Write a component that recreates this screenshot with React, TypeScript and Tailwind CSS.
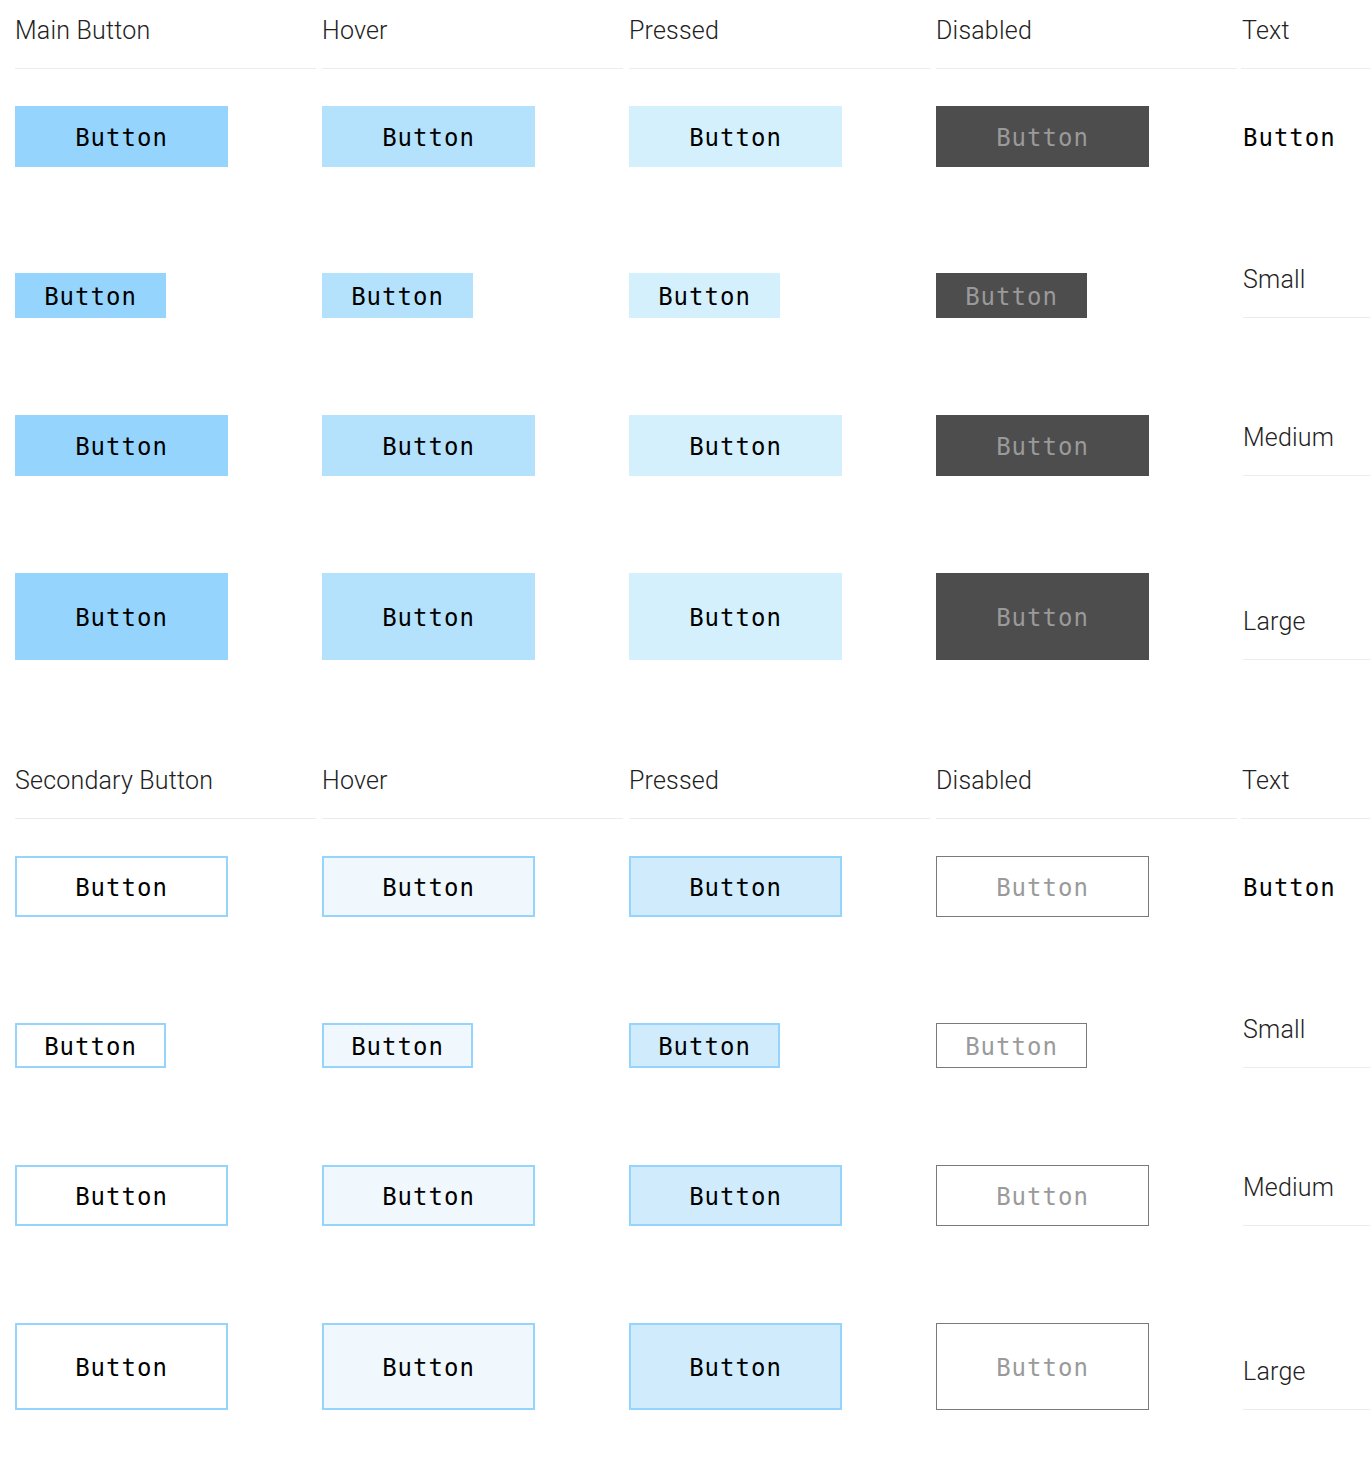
import React from 'react';

type Variant = 'main' | 'secondary';
type State = 'default' | 'hover' | 'pressed' | 'disabled';
type Size = 'default' | 'small' | 'medium' | 'large';

const STATES: State[] = ['default', 'hover', 'pressed', 'disabled'];

const SIZE_CLASS: Record<Size, string> = {
  default: 'w-[213px] h-[61px]',
  small: 'w-[151px] h-[45px]',
  medium: 'w-[213px] h-[61px]',
  large: 'w-[213px] h-[87px]',
};

const SKIN: Record<Variant, Record<State, string>> = {
  main: {
    default: 'bg-[#94d4fd] text-[#000]',
    hover: 'bg-[#b4e2fc] text-[#000]',
    pressed: 'bg-[#d4f0fc] text-[#000]',
    disabled: 'bg-[#4d4d4d] text-[#9a9a9a]',
  },
  secondary: {
    default: 'bg-white border-2 border-[#94d4fd] text-[#000]',
    hover: 'bg-[#f0f8fe] border-2 border-[#94d4fd] text-[#000]',
    pressed: 'bg-[#d0ecfc] border-2 border-[#94d4fd] text-[#000]',
    disabled: 'bg-white border border-[#7a7a7a] text-[#9a9a9a]',
  },
};

const ROWS: { size: Size; label?: string; mt: string }[] = [
  { size: 'default', mt: 'mt-[37px]' },
  { size: 'small', label: 'Small', mt: 'mt-[99px]' },
  { size: 'medium', label: 'Medium', mt: 'mt-[97px]' },
  { size: 'large', label: 'Large', mt: 'mt-[97px]' },
];

const mono = "font-['DejaVu_Sans_Mono',monospace] text-[24px] tracking-[1px] leading-none";
const light = "font-['Roboto',sans-serif] font-light text-[25px] tracking-[0.2px] leading-[28px] text-[#222]";

function DemoButton({ variant, state, size }: { variant: Variant; state: State; size: Size }) {
  return (
    <button
      type="button"
      className={`${SIZE_CLASS[size]} ${SKIN[variant][state]} ${mono} flex items-center justify-center pt-[2px]`}
    >
      Button
    </button>
  );
}

function LabelCell({ children }: { children: React.ReactNode }) {
  return (
    <div className="border-b border-[#ececec]">
      <div className={`${light} pb-[23px]`}>{children}</div>
    </div>
  );
}

function Section({ variant, title }: { variant: Variant; title: string }) {
  const headers = [title, 'Hover', 'Pressed', 'Disabled', 'Text'];
  return (
    <section>
      {/* header row */}
      <div className="grid grid-cols-[301px_301px_301px_301px_1fr] gap-x-[6px] pl-[15px]">
        {headers.map((h, i) => (
          <div key={h} className={`border-b border-[#ececec] ${i === 4 ? '-ml-[2px] pl-[1px]' : ''}`}>
            <div className={`${light} pt-[17px] pb-[23px]`}>{h}</div>
          </div>
        ))}
      </div>

      {ROWS.map((row) => (
        <div
          key={row.size}
          className={`grid grid-cols-[301px_301px_301px_301px_1fr] gap-x-[6px] pl-[15px] items-end ${row.mt}`}
        >
          {STATES.map((s) => (
            <div key={s}>
              <DemoButton variant={variant} state={s} size={row.size} />
            </div>
          ))}
          {row.label ? (
            <LabelCell>{row.label}</LabelCell>
          ) : (
            <div className={`h-[61px] flex items-center pt-[2px] text-[#000] ${mono}`}>Button</div>
          )}
        </div>
      ))}
    </section>
  );
}

export default function App() {
  return (
    <div className="w-[1370px] min-h-[1478px] bg-white pb-[68px]">
      <Section variant="main" title="Main Button" />
      <div className="mt-[90px]">
        <Section variant="secondary" title="Secondary Button" />
      </div>
    </div>
  );
}
